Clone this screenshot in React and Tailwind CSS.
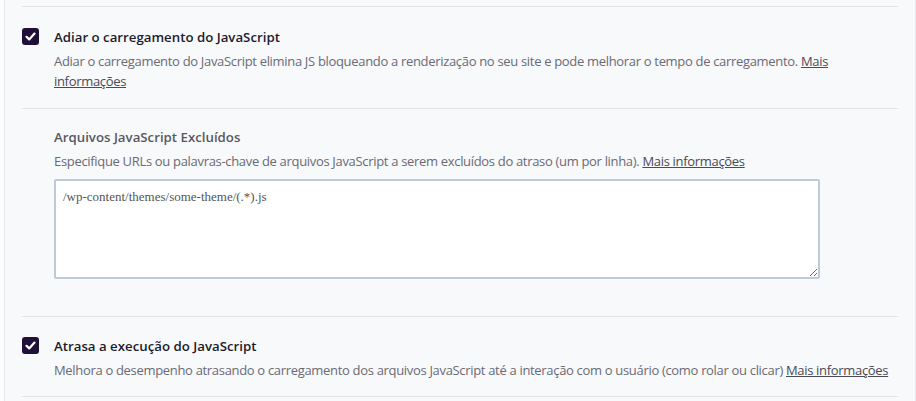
import React from "react";

function Check() {
  return (
    <div className="w-[17px] h-[17px] rounded-[3px] bg-[#1f1038] flex items-center justify-center shrink-0 mt-[1px]">
      <svg width="11" height="9" viewBox="0 0 11 9" fill="none">
        <path d="M1.5 4.8 L4.2 7.4 L9.5 1.6" stroke="white" strokeWidth="2.2" strokeLinecap="round" strokeLinejoin="round" />
      </svg>
    </div>
  );
}

export default function App() {
  return (
    <div className="w-[916px] h-[401px] overflow-hidden bg-white tracking-[-0.32px]" style={{ fontFamily: '"Open Sans", "Noto Sans", sans-serif' }}>
      <div className="ml-[4px] w-[912px] h-full bg-[#f8f9fb] border-l border-r border-[#e6e8ec] pl-[17px] pr-[17px]">
        <div className="h-[7px] border-b border-[#e2e4e8]" />
        <div className="flex gap-[15px] pt-[20px] pb-[17px] border-b border-[#e2e4e8]">
          <Check />
          <div>
            <div className="text-[13.25px] leading-[20px] font-semibold tracking-normal text-[#1d1b2c]">Adiar o carregamento do JavaScript</div>
            <div className="text-[13px] leading-[20px] text-[#6a6a75] mt-[4px]">
              Adiar o carregamento do JavaScript elimina JS bloqueando a renderização no seu site e pode melhorar o tempo de carregamento. <a className="underline text-[#4a4a55]">Mais informações</a>
            </div>
          </div>
        </div>
        <div className="pl-[32px] pt-[18px] pb-[37px] border-b border-[#e2e4e8]">
          <div className="text-[13.25px] leading-[20px] font-semibold tracking-normal text-[#58585f]">Arquivos JavaScript Excluídos</div>
          <div className="text-[13px] leading-[20px] text-[#6a6a75] mt-[4px]">
            Especifique URLs ou palavras-chave de arquivos JavaScript a serem excluídos do atraso (um por linha). <a className="underline text-[#4a4a55]">Mais informações</a>
          </div>
          <textarea
            className="block mt-[8px] w-[766px] h-[100px] bg-white border-2 border-[#c0cad5] rounded-[2px] px-[7px] py-[6px] text-[13px] leading-[20px] text-[#555] outline-none tracking-normal"
            style={{ fontFamily: '"Liberation Serif", serif' }}
            defaultValue="/wp-content/themes/some-theme/(.*).js"
          />
        </div>
        <div className="flex gap-[15px] pt-[19px] pb-[16px] border-b border-[#e2e4e8]">
          <Check />
          <div>
            <div className="text-[13.25px] leading-[20px] font-semibold tracking-normal text-[#1d1b2c]">Atrasa a execução do JavaScript</div>
            <div className="text-[13px] leading-[20px] text-[#6a6a75] mt-[4px]">
              Melhora o desempenho atrasando o carregamento dos arquivos JavaScript até a interação com o usuário (como rolar ou clicar) <a className="underline text-[#4a4a55]">Mais informações</a>
            </div>
          </div>
        </div>
      </div>
    </div>
  );
}
